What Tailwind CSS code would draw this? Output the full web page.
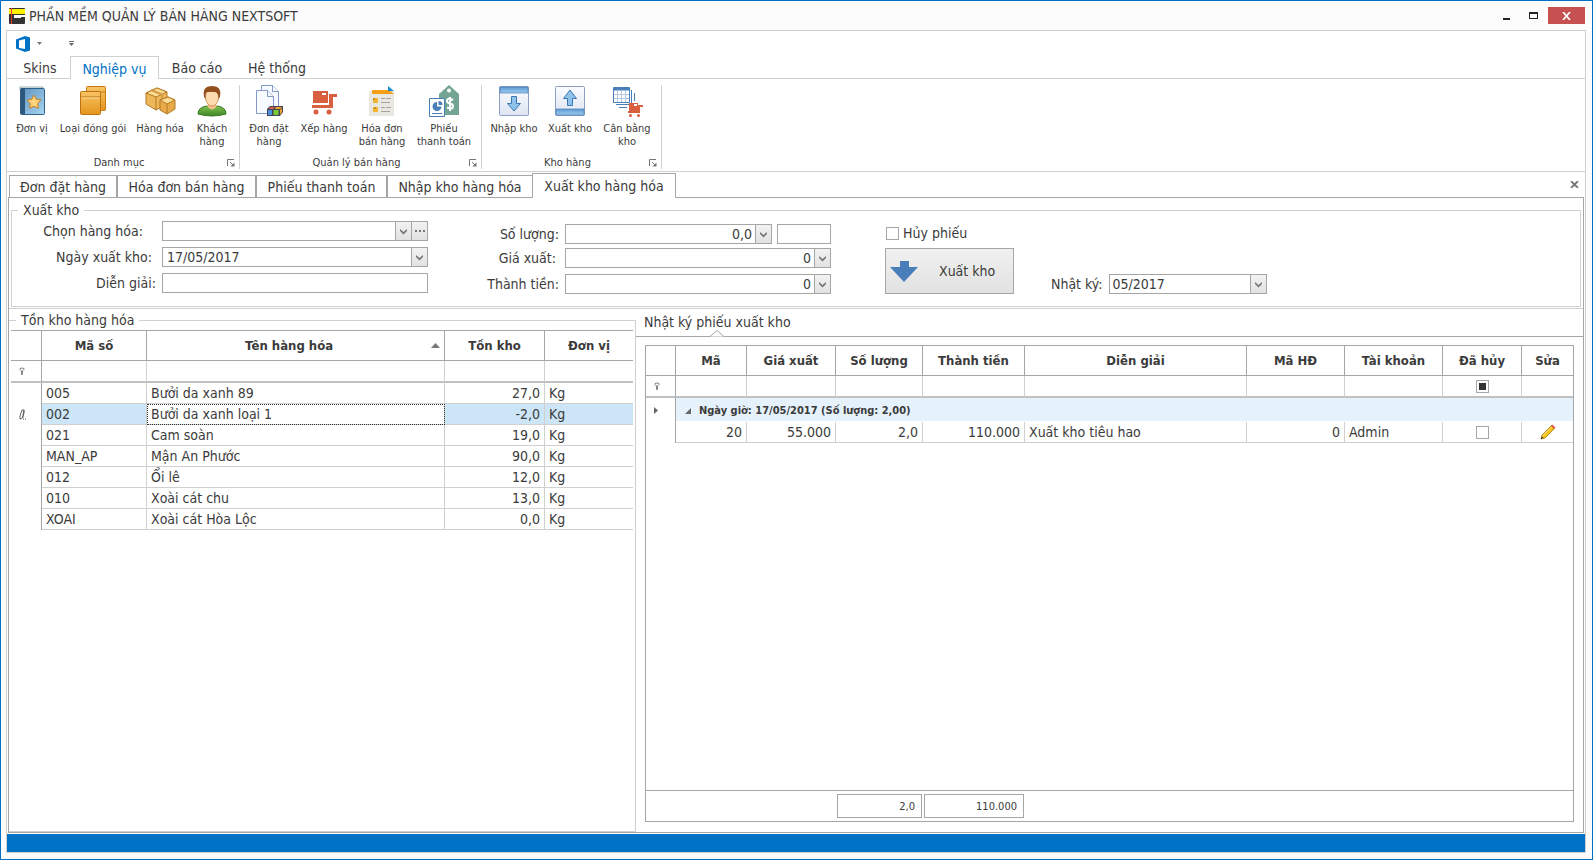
<!DOCTYPE html>
<html lang="vi">
<head>
  <meta charset="UTF-8">
  <meta name="viewport" content="width=device-width, initial-scale=1.0">
  <title>PHẦN MỀM QUẢN LÝ BÁN HÀNG NEXTSOFT</title>
  <script src="https://cdn.jsdelivr.net/npm/@tailwindcss/browser@4"></script>
</head>
<body class="h-screen flex flex-col bg-[#fcfcfc] border border-[#0072c6] font-['DejaVu_Sans_Condensed','DejaVu_Sans',sans-serif] text-sm leading-4 text-[#3b3b3b] pl-[5px] pr-[6px] pb-[6px] overflow-hidden">

  <!-- Shared symbols -->
  <svg class="absolute w-0 h-0">
    <symbol id="chevron" viewBox="0 0 9 7"><path d="M1 1v2l3.500 3.500L8 3V1L4.500 4z" fill="#777"/></symbol>
    <symbol id="launcher" viewBox="0 0 8 8"><path d="M.5 7V.5H7M3 3l3 3" fill="none" stroke="#777"/><path d="M7.500 3.500v4h-4z" fill="#777"/></symbol>
    <symbol id="filter" viewBox="0 0 6 8"><path d="M1 1.500q2-1 4 0v1L3.500 4v3.500h-1V4L1 2.500z" fill="#fff" stroke="#666" stroke-width=".8"/></symbol>
    <linearGradient id="gold" x1="0" y1="0" x2="0" y2="1"><stop offset="0" stop-color="#f8c464"/><stop offset="1" stop-color="#e4951c"/></linearGradient>
    <linearGradient id="blue" x1="0" y1="0" x2="1" y2="1"><stop offset="0" stop-color="#5b93bd"/><stop offset="1" stop-color="#a9d5f2"/></linearGradient>
    <linearGradient id="panel" x1="0" y1="0" x2="0" y2="1"><stop offset="0" stop-color="#fbfcfe"/><stop offset="1" stop-color="#dde5f2"/></linearGradient>
    <linearGradient id="sky" x1="0" y1="0" x2="0" y2="1"><stop offset="0" stop-color="#5d9bd3"/><stop offset="1" stop-color="#9fcbee"/></linearGradient>
    <linearGradient id="green" x1="0" y1="0" x2="0" y2="1"><stop offset="0" stop-color="#7cc04b"/><stop offset="1" stop-color="#3f8726"/></linearGradient>
  </svg>

  <!-- Title bar -->
  <header class="flex items-center h-[29px] shrink-0 pl-[3px]">
    <svg class="w-4 h-4" viewBox="0 0 16 16"><rect width="16" height="16" rx="1" fill="#333"/><path d="M0 1h16v5H0z" fill="#fff000"/><path d="M5 7h11v2H12v1H5z" fill="#fff"/><path d="M2.500 0v16" stroke="#e23b2e"/></svg>
    <h1 class="ml-1">PHẦN MỀM QUẢN LÝ BÁN HÀNG NEXTSOFT</h1>
    <div class="ml-auto mr-px flex items-center">
      <button aria-label="Thu nhỏ" class="w-[24px] h-[17px] flex items-center justify-center"><svg class="w-[7px] h-[9px]" viewBox="0 0 7 9"><path d="M0 7h7v2H0z" fill="#222"/></svg></button>
      <button aria-label="Phóng to" class="w-[30px] h-[17px] flex items-center justify-center"><svg class="w-[9px] h-[7px]" viewBox="0 0 9 7"><path d="M0 0h9v7H0zM1 2v4h7V2z" fill="#222" fill-rule="evenodd"/></svg></button>
      <button aria-label="Đóng" class="w-[37px] h-[17px] flex items-center justify-center bg-[#c75050]"><svg class="w-[9px] h-[8px]" viewBox="0 0 9 8"><path d="M1 0l7 8M8 0L1 8" stroke="#fff" stroke-width="1.800"/></svg></button>
    </div>
  </header>

  <div class="flex-1 min-h-0 flex flex-col bg-white border border-[#d0d0d0]">
    <!-- Quick access -->
    <div class="flex items-center h-[25px] shrink-0 pl-[9px]">
      <button aria-label="Menu" class="flex items-center gap-[7px]">
        <svg class="w-[14px] h-4" viewBox="0 0 14 16"><path d="M9 0l5 1.500v13L9 16l-9-3.500v-9zM9 3L3 4.500v7.500l6 1z" fill="#0072c6" fill-rule="evenodd"/></svg>
        <svg class="w-[5px] h-[3px]" viewBox="0 0 5 3"><path d="M0 0h5L2.500 3z" fill="#777"/></svg>
      </button>
      <button aria-label="Tùy chỉnh" class="ml-[27px]"><svg class="w-[5px] h-[5px]" viewBox="0 0 5 5"><path d="M0 0h5v1H0zM0 2h5L2.500 5z" fill="#666"/></svg></button>
    </div>

    <!-- Ribbon tabs -->
    <nav class="flex h-[23px] shrink-0 pl-[3px] border-b border-[#d0d0d0]">
      <button class="w-[60px] pt-[2px]">Skins</button>
      <button class="w-[89px] h-[23px] pt-px bg-white border border-b-0 border-[#d0d0d0] text-[#0072c6]">Nghiệp vụ</button>
      <button class="w-[76px] pt-[2px]">Báo cáo</button>
      <button class="w-[84px] pt-[2px]">Hệ thống</button>
    </nav>

    <!-- Ribbon -->
    <div class="flex h-[93px] shrink-0 border-b border-[#d0d0d0] pt-[6px] pb-[2px] text-[11px] leading-[13px]">
      <section class="flex flex-col w-[233px] border-r border-[#d0d0d0]">
        <div class="flex flex-1 pl-[3px]">
          <button class="w-[44px] flex flex-col items-center gap-[5px]">
            <svg class="w-8 h-8" viewBox="0 0 32 32"><path d="M4 2h23v3H4z" fill="#f4f1e4" stroke="#38658a" stroke-width=".5"/><rect x="4.500" y="3.500" width="24" height="26" rx="1" fill="url(#blue)" stroke="#2f6088"/><path d="M5 3h4v26H5z" fill="#2d587c"/><path d="M18 10l2.300 4.300 4.700.7-3.300 3.500.7 4.800-4.400-2-4.400 2 .7-4.800-3.300-3.500 4.700-.7z" fill="#ffd27b" stroke="#c87c20"/></svg>
            <span>Đơn vị</span>
          </button>
          <button class="w-[78px] flex flex-col items-center gap-[5px]">
            <svg class="w-8 h-8" viewBox="0 0 32 32"><rect x="9.500" y="1.500" width="19" height="24" rx="1" fill="url(#gold)" stroke="#c67c14"/><path d="M10 7h18" stroke="#c67c14"/><rect x="3.500" y="6.500" width="20" height="23" rx="1" fill="url(#gold)" stroke="#bd7110"/><path d="M4 12h19" stroke="#bd7110"/><path d="M4 13h19" stroke="#fbdc97"/></svg>
            <span class="whitespace-nowrap">Loại đóng gói</span>
          </button>
          <button class="w-[56px] flex flex-col items-center gap-[5px]">
            <svg class="w-8 h-8" viewBox="0 0 32 32" stroke="#b37a24" stroke-linejoin="round"><path d="M2 8l11-5 10 4v12L12 25 2 19z" fill="#eeb757"/><path d="M2 8l11-5 10 4-11 5z" fill="#fbdc94"/><path d="M12 12v13" fill="none"/><path d="M7 5l11 4.500v4" fill="none" stroke="#d39c45" stroke-width="2"/><path d="M16 15l8-3 7 3v9l-8 5-7-4z" fill="#e9ab49"/><path d="M16 15l8-3 7 3-8 4z" fill="#fbdc94"/><path d="M23 19v10" fill="none"/></svg>
            <span>Hàng hóa</span>
          </button>
          <button class="w-[48px] flex flex-col items-center gap-[5px]">
            <svg class="w-8 h-8" viewBox="0 0 32 32"><path d="M2 29q0-7 9-8h10q9 1 9 8-14 4-28 0z" fill="url(#green)" stroke="#3c7a24"/><path d="M11 21q5 7 10 0l-2-3h-6z" fill="#f2c089"/><ellipse cx="16" cy="12.500" rx="6.500" ry="8.500" fill="#fbdcb0" stroke="#b97a3c" stroke-width=".7"/><path d="M8 12Q6 1 16 1t8 11l-1.500 2Q23 8 19 7q-5 0-8 0-2 1-1.500 7z" fill="#93501e"/></svg>
            <span>Khách<br>hàng</span>
          </button>
        </div>
        <div class="flex items-center pl-1 pr-1"><span class="flex-1 text-center">Danh mục</span><button aria-label="Mở Danh mục"><svg class="w-2 h-2"><use href="#launcher"/></svg></button></div>
      </section>

      <section class="flex flex-col w-[242px] border-r border-[#d0d0d0]">
        <div class="flex flex-1 pl-[5px]">
          <button class="w-[48px] flex flex-col items-center gap-[5px]">
            <svg class="w-8 h-8" viewBox="0 0 32 32"><g fill="#f7faff" stroke="#8199c4"><path d="M8.500 .5h11l6 6v17h-17z"/><path d="M19.500 .5v6h6"/><path d="M3.500 5.500h11l6 6v17h-17z"/><path d="M14.500 5.500v6h6"/></g><path d="M14 24l3-3h13v6l-3 4H14z" fill="#445"/><path d="M15 25h4v5h-4z" fill="#4a90dd"/><path d="M20.500 25h5v5h-5z" fill="#7ccc34"/><path d="M17.500 22h4.500l-2 2h-4.500z" fill="#e2604a"/><path d="M23 22h6l-2 2h-5zM27 25l2-2v4l-2 3z" fill="#f0a32c"/></svg>
            <span>Đơn đặt<br>hàng</span>
          </button>
          <button class="w-[62px] flex flex-col items-center gap-[5px]">
            <svg class="w-8 h-8" viewBox="-4 -5 32 32"><path d="M1 1h15v12H1zM17 4h8v3h-4v11H0v-3h17z" fill="#d9603f"/><path d="M10 3h4v2h-4z" fill="#fff"/><circle cx="4" cy="22" r="2.500" fill="#d9603f"/><circle cx="17" cy="22" r="2.500" fill="#d9603f"/></svg>
            <span>Xếp hàng</span>
          </button>
          <button class="w-[54px] flex flex-col items-center gap-[5px]">
            <svg class="w-8 h-8" viewBox="0 0 32 32"><path d="M3 6h25v25H3z" fill="#e9e7e1"/><path d="M6 5h17l5 4H6z" fill="#f6a01a"/><path d="M22 1l6 5h-6z" fill="#1c8fd0"/><path d="M7 13h5v5H7zM7 22h5v5H7z" fill="#f2b52e"/><path d="M7 15l2-2M8 24l2-2" stroke="#a0661a"/><path d="M15 13.500h4M20 13.500h5M15 17.500h9M15 22.500h4M20 22.500h5M15 26.500h9" stroke="#a5a39d"/></svg>
            <span>Hóa đơn<br>bán hàng</span>
          </button>
          <button class="w-[70px] flex flex-col items-center gap-[5px]">
            <svg class="w-8 h-8" viewBox="0 0 32 32"><path d="M11 9l10-9 10 9v21H11z" fill="#74a593"/><circle cx="21" cy="5.500" r="2" fill="#fff"/><path d="M25 15q-6-3-6 1 0 2 3 2.500t3 3q0 3.500-6 1M22 12v14" fill="none" stroke="#fff" stroke-width="2"/><path d="M1.500 13.500h15v18h-15z" fill="#fff" stroke="#4a7ebb"/><path d="M9 17a4.500 4.500 0 1 0 4.500 4.500H9z" fill="#4a7ebb"/><path d="M10.500 16a4 4 0 0 1 4 4h-4z" fill="#4a7ebb"/><path d="M4 28.500h10" stroke="#4a7ebb"/></svg>
            <span class="whitespace-nowrap">Phiếu<br>thanh toán</span>
          </button>
        </div>
        <div class="flex items-center pl-1 pr-1"><span class="flex-1 text-center">Quản lý bán hàng</span><button aria-label="Mở Quản lý bán hàng"><svg class="w-2 h-2"><use href="#launcher"/></svg></button></div>
      </section>

      <section class="flex flex-col w-[180px] border-r border-[#d0d0d0]">
        <div class="flex flex-1 pl-1">
          <button class="w-[56px] flex flex-col items-center gap-[5px]">
            <svg class="w-8 h-8" viewBox="0 0 32 32"><rect x="1.500" y="1.500" width="29" height="29" rx="1" fill="url(#panel)" stroke="#8ba0c4"/><path d="M2 2h28v6H2z" fill="url(#sky)" stroke="#4a7fb8" stroke-width=".7"/><path d="M13.500 11.500h5v7h4L16 26l-6.500-7.500h4z" fill="#8fc3ec" stroke="#3a76b4"/></svg>
            <span class="whitespace-nowrap">Nhập kho</span>
          </button>
          <button class="w-[56px] flex flex-col items-center gap-[5px]">
            <svg class="w-8 h-8" viewBox="0 0 32 32"><rect x="1.500" y="1.500" width="29" height="29" rx="1" fill="url(#panel)" stroke="#8ba0c4"/><path d="M2 24h28v6H2z" fill="url(#sky)" stroke="#4a7fb8" stroke-width=".7"/><path d="M13.500 20.500h5v-7h4L16 5l-6.500 8.500h4z" fill="#8fc3ec" stroke="#3a76b4"/></svg>
            <span class="whitespace-nowrap">Xuất kho</span>
          </button>
          <button class="w-[58px] flex flex-col items-center gap-[5px]">
            <svg class="w-8 h-8" viewBox="0 0 32 32"><g fill="none" stroke="#4a7ebb"><path d="M2.500 2.500h16v15h-16z" fill="#fff"/><path d="M3 4h15" stroke-width="3"/><path d="M6.500 6v11M10.500 6v11M14.500 6v11M3 9.500h15M3 13.500h15" stroke="#b6c8e0"/><path d="M20.500 5v14.500H5M23.500 8v8M8 22.500h8"/></g><path d="M18 18h9v8h-9zM27 20h5v2h-3v6H17v-2h10z" fill="#d9603f"/><path d="M23 19h3v2h-3z" fill="#fff"/><circle cx="19.500" cy="30.500" r="1.500" fill="#d9603f"/><circle cx="27.500" cy="30.500" r="1.500" fill="#d9603f"/></svg>
            <span class="whitespace-nowrap">Cân bằng<br>kho</span>
          </button>
        </div>
        <div class="flex items-center pl-1 pr-1"><span class="flex-1 text-center">Kho hàng</span><button aria-label="Mở Kho hàng"><svg class="w-2 h-2"><use href="#launcher"/></svg></button></div>
      </section>
    </div>

    <!-- Document tabs -->
    <div class="flex items-end h-[25px] shrink-0 pl-[2px] pr-[6px]">
      <button class="w-[108px] h-[22px] border border-b-0 border-[#a6a6a6]">Đơn đặt hàng</button>
      <button class="w-[139px] h-[22px] border border-b-0 border-[#a6a6a6]">Hóa đơn bán hàng</button>
      <button class="w-[131px] h-[22px] border border-b-0 border-[#a6a6a6]">Phiếu thanh toán</button>
      <button class="w-[145px] h-[22px] border border-b-0 border-r-0 border-[#a6a6a6]">Nhập kho hàng hóa</button>
      <button class="w-[144px] h-[25px] -mb-px z-10 bg-white border border-b-0 border-[#a6a6a6]">Xuất kho hàng hóa</button>
      <button aria-label="Đóng thẻ" class="ml-auto mb-[9px]"><svg class="w-[9px] h-[7px]" viewBox="0 0 9 7"><path d="M1 0l7 7M8 0L1 7" stroke="#777" stroke-width="1.800"/></svg></button>
    </div>

    <main class="flex-1 min-h-0 flex flex-col mx-px border border-[#a6a6a6]">
      <!-- Form -->
      <fieldset class="shrink-0 h-[105px] mx-[2px] mt-1 mb-px border border-[#d0d0d0]">
        <legend class="ml-[6px] px-[5px] leading-4">Xuất kho</legend>
        <div class="flex">
          <div class="w-[416px] flex flex-col gap-[6px] pt-[3px]">
            <div class="flex items-center h-5">
              <label for="item" class="w-[131px] text-right shrink-0">Chọn hàng hóa:</label>
              <div class="ml-[19px] flex flex-1 h-5 border border-[#a6a6a6]">
                <div class="relative flex-1">
                  <select id="item" class="appearance-none w-full h-full px-1"><option></option></select>
                  <span class="absolute right-0 top-0 h-full w-4 border-l border-[#a6a6a6] bg-linear-to-b from-[#f2f2f2] to-[#e2e2e2] flex items-center justify-center pointer-events-none"><svg class="w-[9px] h-[7px]"><use href="#chevron"/></svg></span>
                </div>
                <button aria-label="Thêm" class="w-4 border-l border-[#a6a6a6] bg-linear-to-b from-[#f2f2f2] to-[#e2e2e2] flex items-center justify-center"><svg class="w-[10px] h-[2px]" viewBox="0 0 10 2"><path d="M0 0h2v2H0zM4 0h2v2H4zM8 0h2v2H8z" fill="#777"/></svg></button>
              </div>
            </div>
            <div class="flex items-center h-5">
              <label for="date" class="w-[140px] text-right shrink-0">Ngày xuất kho:</label>
              <div class="ml-[10px] flex flex-1 h-5 border border-[#a6a6a6]">
                <input id="date" type="text" value="17/05/2017" class="flex-1 min-w-0 px-1">
                <button aria-label="Chọn ngày" class="w-4 border-l border-[#a6a6a6] bg-linear-to-b from-[#f2f2f2] to-[#e2e2e2] flex items-center justify-center"><svg class="w-[9px] h-[7px]"><use href="#chevron"/></svg></button>
              </div>
            </div>
            <div class="flex items-center h-5">
              <label for="note" class="w-[144px] text-right shrink-0">Diễn giải:</label>
              <input id="note" type="text" class="ml-[6px] flex-1 min-w-0 h-5 px-1 border border-[#a6a6a6]">
            </div>
          </div>

          <div class="w-[403px] flex flex-col gap-[4px] pt-[6px]">
            <div class="flex items-center h-5">
              <label for="qty" class="w-[131px] text-right shrink-0">Số lượng:</label>
              <div class="ml-[6px] flex w-[207px] h-5 border border-[#a6a6a6]">
                <input id="qty" type="text" value="0,0" class="flex-1 min-w-0 px-[3px] text-right">
                <button aria-label="Mở máy tính" class="w-4 border-l border-[#a6a6a6] bg-linear-to-b from-[#f2f2f2] to-[#e2e2e2] flex items-center justify-center"><svg class="w-[9px] h-[7px]"><use href="#chevron"/></svg></button>
              </div>
              <input type="text" aria-label="Đơn vị tính" class="ml-[5px] flex-1 min-w-0 h-5 px-1 border border-[#a6a6a6]">
            </div>
            <div class="flex items-center h-5">
              <label for="price" class="w-[128px] text-right shrink-0">Giá xuất:</label>
              <div class="ml-[9px] flex flex-1 h-5 border border-[#a6a6a6]">
                <input id="price" type="text" value="0" class="flex-1 min-w-0 px-[3px] text-right">
                <button aria-label="Mở máy tính" class="w-4 border-l border-[#a6a6a6] bg-linear-to-b from-[#f2f2f2] to-[#e2e2e2] flex items-center justify-center"><svg class="w-[9px] h-[7px]"><use href="#chevron"/></svg></button>
              </div>
            </div>
            <div class="flex items-center h-5 mt-[2px]">
              <label for="total" class="w-[131px] text-right shrink-0">Thành tiền:</label>
              <div class="ml-[6px] flex flex-1 h-5 border border-[#a6a6a6]">
                <input id="total" type="text" value="0" class="flex-1 min-w-0 px-[3px] text-right">
                <button aria-label="Mở máy tính" class="w-4 border-l border-[#a6a6a6] bg-linear-to-b from-[#f2f2f2] to-[#e2e2e2] flex items-center justify-center"><svg class="w-[9px] h-[7px]"><use href="#chevron"/></svg></button>
              </div>
            </div>
          </div>

          <div class="ml-[54px] pt-[5px]">
            <label class="flex items-center gap-1 h-5 pl-px"><input type="checkbox" class="appearance-none w-[13px] h-[13px] border border-[#a6a6a6] bg-white">Hủy phiếu</label>
            <button class="mt-[5px] flex items-center w-[129px] h-[46px] pl-1 border border-[#a6a6a6] bg-linear-to-b from-[#f0f0f0] to-[#e2e2e2]">
              <svg class="w-[28px] h-[21px]" viewBox="0 0 28 21"><path d="M10 0h9v6h9L14 21 0 6h10z" fill="#4a7ebb"/></svg>
              <span class="ml-[21px]">Xuất kho</span>
            </button>
          </div>

          <div class="ml-[37px] pt-[56px] flex items-start">
            <label for="month" class="leading-5">Nhật ký:</label>
            <div class="ml-[6px] flex w-[158px] h-5 border border-[#a6a6a6]">
              <input id="month" type="text" value="05/2017" class="flex-1 min-w-0 px-[3px]">
              <button aria-label="Chọn tháng" class="w-4 border-l border-[#a6a6a6] bg-linear-to-b from-[#f2f2f2] to-[#e2e2e2] flex items-center justify-center"><svg class="w-[9px] h-[7px]"><use href="#chevron"/></svg></button>
            </div>
          </div>
        </div>
      </fieldset>

      <div class="flex-1 min-h-0 flex border-t border-[#d0d0d0]">
        <!-- Stock list -->
        <fieldset class="w-[627px] shrink-0 mt-[3px] border border-l-0 border-[#d0d0d0]">
          <legend class="ml-[7px] px-[5px] leading-4">Tồn kho hàng hóa</legend>
          <table class="w-[622px] ml-[2px] mt-[2px] table-fixed border-separate border-spacing-0 border-t border-[#a6a6a6] [&_td]:border-[#d0d0d0] [&_th]:border-[#a6a6a6] [&_td]:h-[21px] [&_td]:px-1 [&_td]:border-b">
            <colgroup><col class="w-[31px]"><col class="w-[105px]"><col class="w-[298px]"><col class="w-[100px]"><col></colgroup>
            <thead class="text-[13px]">
              <tr class="h-[30px] [&>th]:border-b [&>th]:border-r">
                <th></th><th>Mã số</th>
                <th><div class="flex items-center pr-1"><span class="flex-1">Tên hàng hóa</span><svg class="w-[9px] h-[5px]" viewBox="0 0 9 5"><path d="M0 5h9L4.500 0z" fill="#777"/></svg></div></th>
                <th>Tồn kho</th><th class="border-r-0!">Đơn vị</th>
              </tr>
            </thead>
            <tbody>
              <tr class="[&>td]:h-[22px]! [&>td]:border-r [&>td]:border-b-2! [&>td]:border-b-[#c0c0c0]! [&>td]:last:border-r-0">
                <td class="border-r-[#a6a6a6]!"><svg class="w-[6px] h-2 ml-1"><use href="#filter"/></svg></td><td></td><td></td><td></td><td></td>
              </tr>
              <tr><td class="border-b-0! border-r border-r-[#a6a6a6]!"></td><td class="border-r">005</td><td class="border-r">Bưởi da xanh 89</td><td class="border-r text-right">27,0</td><td>Kg</td></tr>
              <tr class="bg-[#cde6f7]"><td class="border-b-0! border-r border-r-[#a6a6a6]! bg-white"><svg class="w-2 h-[11px] ml-1" viewBox="0 0 8 11"><path d="M1 7l2-6h2L3.500 9 1 10zM5 1v3L3.500 9" fill="none" stroke="#555" stroke-width=".9"/><path d="M4 10h1M6 10h1" stroke="#555"/></svg></td><td class="border-r">002</td><td class="bg-white border-r outline-1 outline-dotted outline-[#333] -outline-offset-1">Bưởi da xanh loại 1</td><td class="border-r text-right">-2,0</td><td>Kg</td></tr>
              <tr><td class="border-b-0! border-r border-r-[#a6a6a6]!"></td><td class="border-r">021</td><td class="border-r">Cam soàn</td><td class="border-r text-right">19,0</td><td>Kg</td></tr>
              <tr><td class="border-b-0! border-r border-r-[#a6a6a6]!"></td><td class="border-r">MAN_AP</td><td class="border-r">Mận An Phước</td><td class="border-r text-right">90,0</td><td>Kg</td></tr>
              <tr><td class="border-b-0! border-r border-r-[#a6a6a6]!"></td><td class="border-r">012</td><td class="border-r">Ổi lê</td><td class="border-r text-right">12,0</td><td>Kg</td></tr>
              <tr><td class="border-b-0! border-r border-r-[#a6a6a6]!"></td><td class="border-r">010</td><td class="border-r">Xoài cát chu</td><td class="border-r text-right">13,0</td><td>Kg</td></tr>
              <tr><td class="border-b-0! border-r border-r-[#a6a6a6]!"></td><td class="border-r">XOAI</td><td class="border-r">Xoài cát Hòa Lộc</td><td class="border-r text-right">0,0</td><td>Kg</td></tr>
            </tbody>
          </table>
        </fieldset>

        <!-- Export log -->
        <section class="flex-1 min-w-0 flex flex-col">
          <div class="relative h-[28px] shrink-0 border-b border-[#a6a6a6] pl-2">
            <h2 class="leading-[26px]">Nhật ký phiếu xuất kho</h2>
            <svg class="absolute left-[74px] -bottom-px w-[14px] h-[7px]" viewBox="0 0 14 7"><path d="M0 6.500L7 .5l7 6" fill="#fff" stroke="#a6a6a6"/></svg>
          </div>
          <div class="flex-1 flex flex-col mt-2 mx-[9px] mb-[10px] border border-[#a6a6a6]">
            <table class="w-full table-fixed border-separate border-spacing-0 [&_td]:border-[#d0d0d0] [&_th]:border-[#a6a6a6] [&_td]:px-1">
              <colgroup><col class="w-[30px]"><col class="w-[71px]"><col class="w-[89px]"><col class="w-[87px]"><col class="w-[102px]"><col><col class="w-[98px]"><col class="w-[98px]"><col class="w-[79px]"><col class="w-[51px]"></colgroup>
              <thead class="text-[13px]">
                <tr class="h-[30px] [&>th]:border-b [&>th]:border-r [&>th]:last:border-r-0">
                  <th></th><th>Mã</th><th>Giá xuất</th><th>Số lượng</th><th>Thành tiền</th><th>Diễn giải</th><th>Mã HĐ</th><th>Tài khoản</th><th>Đã hủy</th><th>Sửa</th>
                </tr>
              </thead>
              <tbody>
                <tr class="[&>td]:h-[22px] [&>td]:border-r [&>td]:border-b-2 [&>td]:border-b-[#c0c0c0]! [&>td]:last:border-r-0">
                  <td class="border-r-[#a6a6a6]!"><svg class="w-[6px] h-2 ml-1"><use href="#filter"/></svg></td><td></td><td></td><td></td><td></td><td></td><td></td><td></td>
                  <td><input type="checkbox" checked aria-label="Lọc đã hủy" class="appearance-none block mx-auto w-[13px] h-[13px] border border-[#a6a6a6] bg-[#333] bg-clip-content p-[2px]"></td><td></td>
                </tr>
                <tr>
                  <td class="h-6 border-r border-r-[#a6a6a6]!"><svg class="w-[4px] h-[7px] ml-1" viewBox="0 0 4 7"><path d="M0 0l4 3.500L0 7z" fill="#666"/></svg></td>
                  <td colspan="9" class="bg-[#e5f1fb] border-b border-b-white! text-[11px] font-bold"><div class="flex items-center gap-2 pl-[5px] pt-[3px]"><svg class="w-[6px] h-[6px]" viewBox="0 0 6 6"><path d="M6 0v6H0z" fill="#666"/></svg>Ngày giờ: 17/05/2017 (Số lượng: 2,00)</div></td>
                </tr>
                <tr class="[&>td]:h-[21px] [&>td]:border-r [&>td]:border-b [&>td]:last:border-r-0">
                  <td class="border-b-0! border-r-[#a6a6a6]!"></td><td class="text-right">20</td><td class="text-right">55.000</td><td class="text-right">2,0</td><td class="text-right">110.000</td><td>Xuất kho tiêu hao</td><td class="text-right">0</td><td>Admin</td>
                  <td><input type="checkbox" aria-label="Đã hủy" class="appearance-none block mx-auto w-[13px] h-[13px] border border-[#a6a6a6]"></td>
                  <td><button aria-label="Sửa" class="block mx-auto"><svg class="w-4 h-4" viewBox="0 0 16 16"><path d="M1 15l1-4L12 1l3 3L5 14z" fill="#f5c21b" stroke="#a8770c" stroke-width=".8"/><path d="M2.500 12L12 2.500" stroke="#fdeb8a"/><path d="M11 2l1.500-1.500 3 3L14 5z" fill="#e5604c"/><path d="M1 15l.7-2.500L3.500 14z" fill="#333"/></svg></button></td>
                </tr>
              </tbody>
            </table>
            <div class="mt-auto h-[31px] flex border-t border-[#a6a6a6] pt-[3px] pb-[3px] pl-[191px] gap-[2px] text-[11px]">
              <output class="w-[85px] border border-[#a6a6a6] pr-[6px] text-right leading-[23px]">2,0</output>
              <output class="w-[100px] border border-[#a6a6a6] pr-[6px] text-right leading-[23px]">110.000</output>
            </div>
          </div>
        </section>
      </div>
    </main>
    <footer class="h-[18px] shrink-0 mt-px bg-[#0072c6]"></footer>
  </div>
</body>
</html>
